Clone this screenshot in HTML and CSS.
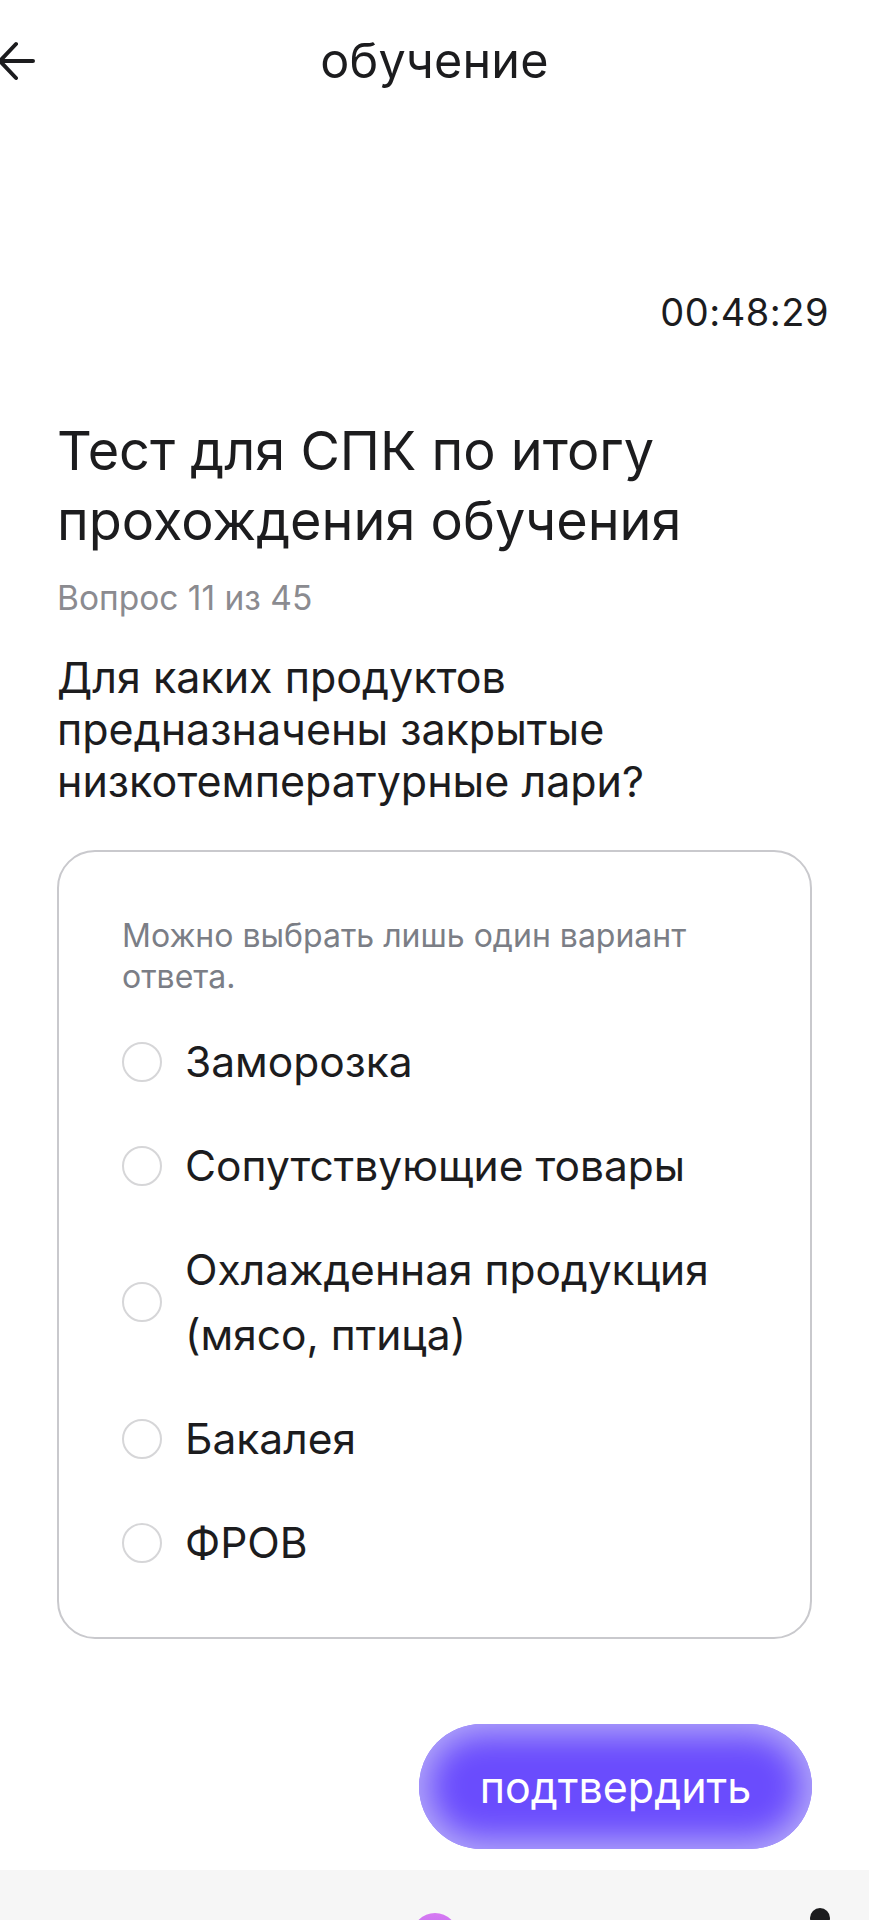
FILE: index.html
```html
<!DOCTYPE html>
<html lang="ru">
<head>
<meta charset="utf-8">
<title>обучение</title>
<link rel="stylesheet" href="styles.css">
</head>
<body>
<div class="screen">
  <header class="topbar">
    <svg class="back" width="40" height="44" viewBox="0 0 40 44" aria-hidden="true">
      <path d="M34 22 H2 M17 5 L1 22 L17 39" fill="none" stroke="#1c1c1e" stroke-width="4" stroke-linecap="round" stroke-linejoin="round"/>
    </svg>
    <div class="topbar-title">обучение</div>
  </header>

  <div class="timer">00:48:29</div>

  <main class="content">
    <h1 class="test-title">Тест для СПК по итогу прохождения обучения</h1>
    <div class="counter">Вопрос 11 из 45</div>
    <div class="question">Для каких продуктов предназначены закрытые низкотемпературные лари?</div>

    <section class="card">
      <p class="hint">Можно выбрать лишь один вариант ответа.</p>
      <ul class="options">
        <li class="option"><span class="radio"></span><span class="label">Заморозка</span></li>
        <li class="option"><span class="radio"></span><span class="label">Сопутствующие товары</span></li>
        <li class="option"><span class="radio"></span><span class="label">Охлажденная продукция (мясо, птица)</span></li>
        <li class="option"><span class="radio"></span><span class="label">Бакалея</span></li>
        <li class="option"><span class="radio"></span><span class="label">ФРОВ</span></li>
      </ul>
    </section>

    <div class="actions">
      <button class="confirm">подтвердить</button>
    </div>
  </main>

  <nav class="bottombar">
    <span class="nav-orb"></span>
    <span class="nav-dark"></span>
  </nav>
</div>
</body>
</html>
```

FILE: styles.css
```css
* { box-sizing: border-box; }
html, body {
  margin: 0;
  padding: 0;
  background: #ffffff;
}
body {
  font-family: Inter, "Noto Sans", sans-serif;
  color: #1c1c1e;
  overflow: hidden;
}
.screen {
  width: 869px;
  height: 1920px;
  display: flex;
  flex-direction: column;
  overflow: hidden;
}
.topbar {
  height: 122px;
  display: flex;
  align-items: center;
  justify-content: center;
  position: relative;
}
.back {
  position: absolute;
  left: -1px;
  top: 39px;
}
.topbar-title {
  font-size: 48.5px;
  line-height: 58px;
  font-weight: 400;
  letter-spacing: 0.2px;
}
.timer {
  margin-top: 167px;
  padding-right: 40px;
  text-align: right;
  font-size: 38px;
  line-height: 46px;
  letter-spacing: 0.5px;
}
.content {
  padding: 0 57px;
  display: flex;
  flex-direction: column;
}
.test-title {
  margin: 81px 0 0;
  font-size: 54px;
  line-height: 70px;
  font-weight: 400;
}
.counter {
  margin-top: 24px;
  font-size: 33.5px;
  line-height: 36px;
  color: #8b8b90;
}
.question {
  margin-top: 35px;
  font-size: 43px;
  line-height: 52px;
}
.card {
  margin-top: 43px;
  border: 2px solid #c9c9cd;
  border-radius: 38px;
  padding: 63px 88px 62px 63px;
}
.hint {
  margin: 0;
  font-size: 32px;
  line-height: 41px;
  color: #7b7e86;
}
.options {
  list-style: none;
  margin: 32px 0 0;
  padding: 0;
  display: flex;
  flex-direction: column;
  gap: 39px;
}
.option {
  display: flex;
  align-items: center;
  gap: 23px;
}
.radio {
  flex: 0 0 40px;
  width: 40px;
  height: 40px;
  border-radius: 50%;
  border: 2.5px solid #d6d6d8;
}
.label {
  font-size: 42.5px;
  line-height: 65px;
}
.actions {
  margin-top: 85px;
  display: flex;
  justify-content: flex-end;
}
.confirm {
  width: 393px;
  height: 125px;
  border: none;
  border-radius: 63px;
  background: #6a4cfd;
  box-shadow: inset 0 0 32px 10px #b5aaf9;
  color: #ffffff;
  font-family: Inter, "Noto Sans", sans-serif;
  font-size: 43px;
  padding: 0;
}
.bottombar {
  margin-top: auto;
  height: 50px;
  background: #f6f6f6;
  display: flex;
  align-items: flex-start;
}
.nav-orb {
  margin-left: 412px;
  margin-top: 43px;
  width: 46px;
  height: 46px;
  border-radius: 50%;
  background: linear-gradient(180deg, #d77af2, #a75cf0);
}
.nav-dark {
  margin-left: 352px;
  margin-top: 38px;
  width: 20px;
  height: 20px;
  border-radius: 50%;
  background: #1c1c1e;
}
```
